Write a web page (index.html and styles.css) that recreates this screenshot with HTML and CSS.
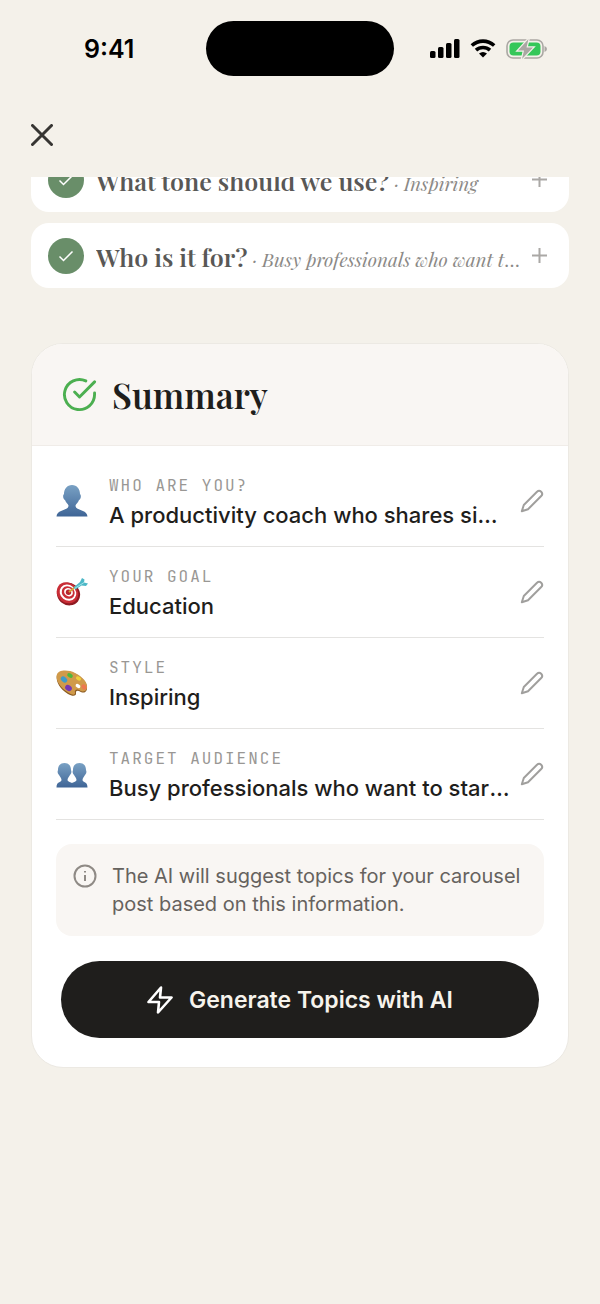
FILE: index.html
```html
<!DOCTYPE html>
<html lang="en">
<head>
    <meta charset="UTF-8">
    <meta name="viewport" content="width=device-width, initial-scale=1.0">
    <title>Summary</title>
    <link rel="stylesheet" href="styles.css">
</head>
<body>

<div class="status-bar">
    <span class="time">9:41</span>
    <div class="island"></div>
    <div class="status-icons">
        <svg width="30" height="19" viewBox="0 0 30 19">
            <rect x="0" y="12" width="5.500" height="7" rx="1.500"/>
            <rect x="8" y="8" width="5.500" height="11" rx="1.500"/>
            <rect x="16" y="4" width="5.500" height="15" rx="1.500"/>
            <rect x="24" y="0" width="5.500" height="19" rx="1.500"/>
        </svg>
        <svg width="26" height="19" viewBox="0 0 26 19">
            <path d="M1.800 6.500C8.500.6 17.500.6 24.200 6.500M6 11.200C10 7.600 16 7.600 20 11.200" fill="none" stroke="#000" stroke-width="3.600"/>
            <path d="M13 18.500L9 14.600Q13 11.500 17 14.600Z"/>
        </svg>
        <svg width="41" height="20" viewBox="0 0 41 20">
            <rect x="1" y="1" width="36" height="18" rx="6" fill="none" stroke="#aaa7a3" stroke-width="1.600"/>
            <rect x="3.500" y="3.500" width="31" height="13" rx="4" fill="#35c759"/>
            <path d="M38.500 7Q41 8 41 10T38.500 13Z" fill="#aaa7a3"/>
            <path d="M22.500 0L12 11.500H18L16 20L27 8.500H20.500Z" fill="#aaa7a3" stroke="#f4f1ea" stroke-width="2.400" paint-order="stroke"/>
        </svg>
    </div>
</div>

<div class="nav">
    <button class="close" aria-label="Close">
        <svg width="22" height="22" viewBox="0 0 22 22"><path d="M1.500 1.500L20.500 20.500M20.500 1.500L1.500 20.500"/></svg>
    </button>
</div>

<div class="content">
    <div class="questions">
        <button class="question">
            <span class="check"><svg width="16" height="12" viewBox="0 0 16 12"><path d="M1.500 6.500L5.500 10.500L14.500 1.500"/></svg></span>
            <span class="question-text"><b>What tone should we use?</b> <i>· Inspiring</i></span>
            <svg class="plus" width="17" height="17" viewBox="0 0 17 17"><path d="M8.500 1V16M1 8.500H16"/></svg>
        </button>
        <button class="question">
            <span class="check"><svg width="16" height="12" viewBox="0 0 16 12"><path d="M1.500 6.500L5.500 10.500L14.500 1.500"/></svg></span>
            <span class="question-text"><b>Who is it for?</b> <i>· Busy professionals who want to start</i></span>
            <svg class="plus" width="17" height="17" viewBox="0 0 17 17"><path d="M8.500 1V16M1 8.500H16"/></svg>
        </button>
    </div>

    <div class="summary">
        <div class="summary-header">
            <svg width="35" height="35" viewBox="0 0 36 36">
                <path d="M33.500 16.500V18A15.500 15.500 0 1 1 24.500 4M33.500 5L18 20.500L13 15.500"/>
            </svg>
            <h1>Summary</h1>
        </div>

        <div class="summary-body">
            <div class="row">
                <svg width="32" height="32" viewBox="0 0 32 32">
                    <defs><linearGradient id="person" x1="0" y1="0" x2="0" y2="1"><stop offset="0" stop-color="#79a1c4"/><stop offset="1" stop-color="#3f6596"/></linearGradient></defs>
                    <path d="M16 0C21 0 24 4 24 9C25.500 10 25 14 23 15C22 18 19.500 19 19.500 21C20 26 31 24 31.500 31.500H.5C1 24 12 26 12.500 21C12.500 19 10 18 9 15C7 14 6.500 10 8 9C8 4 11 0 16 0Z" fill="url(#person)"/>
                </svg>
                <div class="row-text">
                    <div class="label">WHO ARE YOU?</div>
                    <div class="value">A productivity coach who shares simple tips</div>
                </div>
                <button class="edit" aria-label="Edit who you are"><svg width="24" height="24" viewBox="0 0 24 24"><path d="M21.200 2.800a3 3 0 0 0-4.200 0L3.800 16L1.800 22.200L8 20.200L21.200 7A3 3 0 0 0 21.200 2.800Z"/></svg></button>
            </div>
            <div class="row">
                <svg width="32" height="32" viewBox="0 0 32 32">
                    <ellipse cx="12.500" cy="18" rx="12" ry="11" transform="rotate(38 12.500 18)" fill="#8f1a22"/>
                    <ellipse cx="11.500" cy="16.800" rx="11.300" ry="10" transform="rotate(38 11.500 16.800)" fill="#c92d36"/>
                    <ellipse cx="12" cy="16.700" rx="8.700" ry="7.700" transform="rotate(38 12 16.700)" fill="#fff"/>
                    <ellipse cx="12.200" cy="16.500" rx="6.800" ry="6" transform="rotate(38 12.200 16.500)" fill="#c92d36"/>
                    <ellipse cx="12.500" cy="16.200" rx="4.600" ry="4" transform="rotate(38 12.500 16.200)" fill="#fff"/>
                    <circle cx="12.500" cy="16.200" r="2.700" fill="#b8252f"/>
                    <path d="M13 16L20 10.500" stroke="#d7a23c" stroke-width="2"/>
                    <path d="M17.500 11.500L24 6L26 2L28.500 3.500L28 6.500L32 7.500L30 10L25.500 9.500L19.500 13.500Z" fill="#4db8c7"/>
                    <path d="M18.500 12.500L28 6.500" stroke="#a5e3e8" stroke-width="1"/>
                </svg>
                <div class="row-text">
                    <div class="label">YOUR GOAL</div>
                    <div class="value">Education</div>
                </div>
                <button class="edit" aria-label="Edit your goal"><svg width="24" height="24" viewBox="0 0 24 24"><path d="M21.200 2.800a3 3 0 0 0-4.200 0L3.800 16L1.800 22.200L8 20.200L21.200 7A3 3 0 0 0 21.200 2.800Z"/></svg></button>
            </div>
            <div class="row">
                <svg width="32" height="32" viewBox="0 0 32 32">
                    <path d="M.7 9C2 3 12 3 19 6.500C27 10.500 32 17 31 22C30 26.500 26 26 24 24.500C22 23 19.500 23.500 20 26C20.500 29 17 30 12 27C4 22 0 15 .7 9Z" fill="#8a5a22"/>
                    <path d="M.7 8.300C2 2.500 12 2.500 19 6C27 10 32 16 31 20.800C30 25.500 26 25 24 23.500C21 21.500 18 23 19 26C19 28 17 28.500 12 25.500C4 20.500 0 14 .7 8.300Z" fill="#d09a4a"/>
                    <ellipse cx="22" cy="19" rx="2.600" ry="1.800" transform="rotate(30 22 19)" fill="#fff"/>
                    <ellipse cx="8" cy="12.500" rx="3.600" ry="2.500" transform="rotate(40 8 12.500)" fill="#3e9bc7"/>
                    <ellipse cx="14" cy="8.500" rx="3" ry="2" transform="rotate(30 14 8.500)" fill="#4db83d"/>
                    <ellipse cx="22.500" cy="11.500" rx="2.800" ry="1.900" transform="rotate(35 22.500 11.500)" fill="#efd03c"/>
                    <ellipse cx="28" cy="20" rx="2.900" ry="2.200" transform="rotate(50 28 20)" fill="#ed7850"/>
                    <ellipse cx="12.500" cy="21" rx="3.600" ry="2.700" transform="rotate(35 12.500 21)" fill="#7637b5"/>
                </svg>
                <div class="row-text">
                    <div class="label">STYLE</div>
                    <div class="value">Inspiring</div>
                </div>
                <button class="edit" aria-label="Edit style"><svg width="24" height="24" viewBox="0 0 24 24"><path d="M21.200 2.800a3 3 0 0 0-4.200 0L3.800 16L1.800 22.200L8 20.200L21.200 7A3 3 0 0 0 21.200 2.800Z"/></svg></button>
            </div>
            <div class="row">
                <svg width="32" height="32" viewBox="0 0 32 32">
                    <defs><linearGradient id="people" x1="0" y1="0" x2="0" y2="1"><stop offset="0" stop-color="#79a1c4"/><stop offset="1" stop-color="#3f6596"/></linearGradient></defs>
                    <path d="M8.500 5C13 5 15 8 15 12C16 14 15 16 14 17C13 19 11.500 20 11.500 22C12 24 15 24 16 25C17 24 20 24 20.500 22C20.500 20 19 19 18 17C17 16 16 14 17 12C17 8 19 5 23.500 5C28 5 30 8 30 12C31 14 30 16 29 17C28 19 26.500 20 26.500 22C27 25 31.500 23 31.500 29.500H.5C.5 23 5 25 5.500 22C5.500 20 4 19 3 17C2 16 1 14 2 12C2 8 4 5 8.500 5Z" fill="url(#people)"/>
                </svg>
                <div class="row-text">
                    <div class="label">TARGET AUDIENCE</div>
                    <div class="value">Busy professionals who want to start posting</div>
                </div>
                <button class="edit" aria-label="Edit target audience"><svg width="24" height="24" viewBox="0 0 24 24"><path d="M21.200 2.800a3 3 0 0 0-4.200 0L3.800 16L1.800 22.200L8 20.200L21.200 7A3 3 0 0 0 21.200 2.800Z"/></svg></button>
            </div>

            <div class="note">
                <svg width="24" height="24" viewBox="0 0 24 24"><circle cx="12" cy="12" r="10.500"/><path d="M12 11V17M12 7V8.500"/></svg>
                <p>The AI will suggest topics for your carousel post based on this information.</p>
            </div>

            <button class="generate">
                <svg width="26" height="28" viewBox="0 0 26 28"><path d="M14 1.500L1.500 16H12L11 26.500L24.500 11.500H13Z"/></svg>
                Generate Topics with AI
            </button>
        </div>
    </div>
</div>

</body>
</html>
```
FILE: styles.css
```css
* {
    box-sizing: border-box;
}

body {
    margin: 0;
    min-height: 100vh;
    background-color: #f4f1ea;
    font-family: Inter, "Liberation Sans", sans-serif;
    color: #1f1e1c;
}

button {
    padding: 0;
    border: none;
    background: none;
    font-family: inherit;
    color: inherit;
    cursor: pointer;
}

svg {
    display: block;
    flex-shrink: 0;
}

/* Phone status bar */
.status-bar {
    display: grid;
    grid-template-columns: 1fr auto 1fr;
    align-items: center;
    padding-top: 21px;
    color: #000;
}

.time {
    padding-left: 84px;
    font-size: 25px;
    font-weight: 600;
}

.island {
    width: 188px;
    height: 55px;
    border-radius: 28px;
    background-color: #000;
}

.status-icons {
    display: flex;
    align-items: center;
    justify-content: flex-end;
    gap: 10px;
    padding-right: 53px;
}

.nav {
    padding: 48px 31px 31px;
}

.close {
    display: block;
}

.close path {
    stroke: #363532;
    stroke-width: 3;
    stroke-linecap: round;
}

.content {
    padding: 0 31px;
    overflow: hidden;
}

/* Answered questions, the first one is scrolled under the nav */
.questions {
    display: flex;
    flex-direction: column;
    gap: 11px;
    margin-top: -30px;
}

.question {
    display: flex;
    align-items: center;
    gap: 12px;
    height: 65px;
    padding: 0 21px 0 17px;
    border-radius: 18px;
    background-color: #fff;
    text-align: left;
}

.check {
    display: flex;
    align-items: center;
    justify-content: center;
    flex-shrink: 0;
    width: 36px;
    height: 36px;
    border-radius: 50%;
    background-color: #698e69;
}

.check path,
.plus path {
    fill: none;
    stroke: #fff;
    stroke-width: 1.5;
}

.plus path {
    stroke: #aaa8a5;
    stroke-width: 2;
}

.question-text {
    flex: 1;
    min-width: 0;
    margin-right: -4px;
    padding-top: 4px;
    overflow: hidden;
    text-overflow: ellipsis;
    white-space: nowrap;
    font-family: "Playfair Display", "Liberation Serif", serif;
    font-size: 19px;
    line-height: 36px;
    color: #8b8986;
}

.question-text b {
    font-size: 25px;
    font-weight: 600;
    color: #595856;
}

.summary {
    margin: 55px 0;
    border: 1px solid #ece9e3;
    border-radius: 32px;
    background-color: #fff;
    overflow: hidden;
}

.summary-header {
    display: flex;
    align-items: center;
    gap: 15px;
    height: 102px;
    padding: 0 30px;
    border-bottom: 1px solid #f0ece8;
    background-color: #f9f6f3;
}

.summary-header path {
    fill: none;
    stroke: #4caf50;
    stroke-width: 3;
    stroke-linecap: round;
    stroke-linejoin: round;
}

.summary-header h1 {
    margin: 0;
    font-family: "Playfair Display", "Liberation Serif", serif;
    font-size: 35px;
    font-weight: 600;
}

.summary-body {
    padding: 10px 24px 29px;
}

.row {
    display: flex;
    align-items: center;
    height: 91px;
    border-bottom: 1px solid #e4e3e1;
}

.row-text {
    flex: 1;
    min-width: 0;
    margin: 0 8px 0 21px;
    padding-top: 4px;
}

.label {
    font-family: "JetBrains Mono", "Liberation Mono", monospace;
    font-size: 16px;
    line-height: 24px;
    letter-spacing: 2px;
    color: #999794;
}

.value {
    overflow: hidden;
    text-overflow: ellipsis;
    white-space: nowrap;
    font-size: 22px;
    font-weight: 500;
    line-height: 34px;
}

.edit path {
    fill: none;
    stroke: #a09f9d;
    stroke-width: 2;
    stroke-linejoin: round;
}

.note {
    display: flex;
    gap: 15px;
    margin-top: 24px;
    padding: 18px 17px;
    border-radius: 16px;
    background-color: #f9f6f3;
}

.note svg {
    margin-top: 2px;
    fill: none;
    stroke: #8f8a85;
    stroke-width: 2;
}

.note p {
    margin: 0;
    font-size: 20px;
    line-height: 28px;
    color: #66625e;
}

.generate {
    display: flex;
    align-items: center;
    justify-content: center;
    gap: 16px;
    width: calc(100% - 10px);
    height: 77px;
    margin: 25px 5px 0;
    border-radius: 39px;
    background-color: #1f1e1c;
    font-size: 23px;
    font-weight: 600;
    color: #f6f3ec;
}

.generate path {
    fill: none;
    stroke: #fff;
    stroke-width: 2.6;
    stroke-linejoin: round;
}
```
